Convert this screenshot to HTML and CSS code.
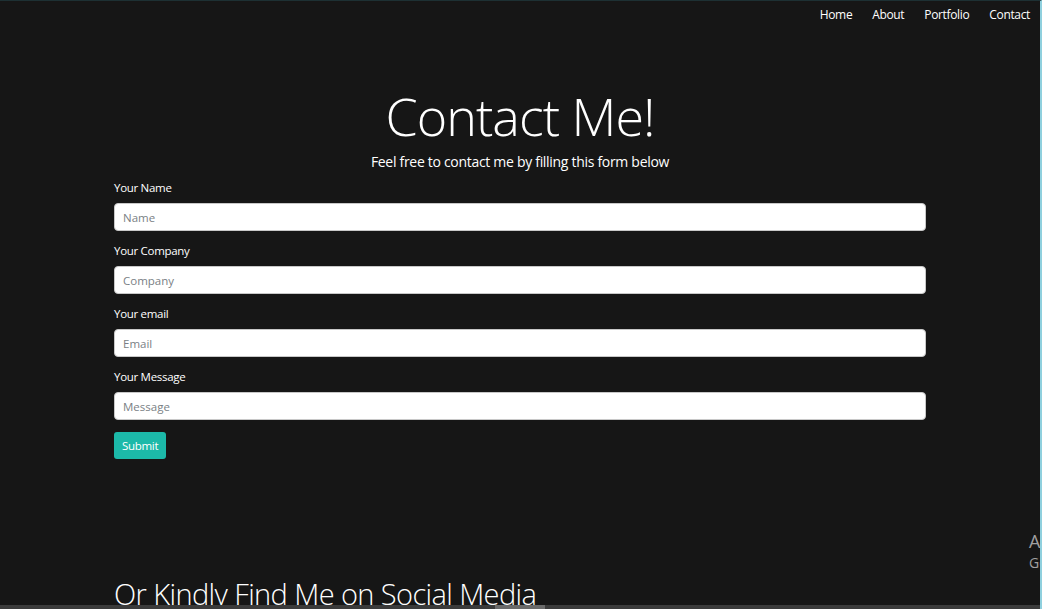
FILE: index.html
```html
<!DOCTYPE html>
<html lang="en">
<head>
<meta charset="utf-8">
<title>Contact Me</title>
<link rel="stylesheet" href="styles.css">
</head>
<body>
<div class="frame">
  <nav class="nav">
    <a href="#">Home</a>
    <a href="#">About</a>
    <a href="#">Portfolio</a>
    <a href="#">Contact</a>
  </nav>
  <main class="container">
    <header class="hero">
      <h1 class="title">Contact Me!</h1>
      <p class="lead">Feel free to contact me by filling this form below</p>
    </header>
    <form class="form">
      <div class="group">
        <label class="label">Your Name</label>
        <input class="field" type="text" placeholder="Name">
      </div>
      <div class="group">
        <label class="label">Your Company</label>
        <input class="field" type="text" placeholder="Company">
      </div>
      <div class="group">
        <label class="label">Your email</label>
        <input class="field" type="text" placeholder="Email">
      </div>
      <div class="group">
        <label class="label">Your Message</label>
        <input class="field" type="text" placeholder="Message">
      </div>
      <button class="submit" type="button">Submit</button>
    </form>
    <h2 class="social">Or Kindly Find Me on Social Media</h2>
  </main>
  <div class="watermark">
    <div class="wm-title">Activate Windows</div>
    <div class="wm-sub">Go to Settings to activate Windows.</div>
  </div>
  <div class="bottombar"><span class="thumb"></span></div>
</div>
</body>
</html>
```
FILE: styles.css
```css
* { box-sizing: border-box; }
html, body { margin: 0; padding: 0; background: #161616; }
body { font-family: "Open Sans", "Liberation Sans", sans-serif; color: #fff; }

.frame {
  position: relative;
  width: 1042px;
  height: 609px;
  overflow: hidden;
  background: #161616;
  border-top: 1px solid #1d3033;
  border-right: 2px solid #8fd0de;
}

.nav {
  display: flex;
  justify-content: flex-end;
  gap: 20px;
  padding: 6px 10px 0 0;
  height: 28px;
}
.nav a {
  color: #fff;
  text-decoration: none;
  font-size: 12px;
  letter-spacing: -0.35px;
  line-height: 16px;
}

.container {
  width: 812px;
  margin: 0 auto;
}

.hero { text-align: center; padding-top: 56px; }
.title {
  margin: 0;
  font-weight: 300;
  font-size: 52px;
  letter-spacing: -1px;
  line-height: 62px;
}
.lead {
  margin: 4px 0 0;
  font-size: 14px;
  letter-spacing: -0.3px;
  line-height: 22px;
  font-weight: 400;
}

.form { margin-top: 7px; }
.group { display: flex; flex-direction: column; margin-bottom: 12px; }
.label {
  font-size: 11.5px;
  letter-spacing: -0.3px;
  line-height: 16px;
  margin-bottom: 7px;
}
.field {
  width: 100%;
  height: 28px;
  border: 1px solid #c8c8c8;
  border-radius: 4px;
  background: #fff;
  padding: 0 8px;
  font-family: inherit;
  font-size: 11.5px;
  color: #333;
}
.field::placeholder { color: #7a7f85; }

.submit {
  display: block;
  margin: 0;
  height: 27px;
  padding: 0 8px;
  border: none;
  border-radius: 3px;
  background: #1cb9a9;
  color: #fff;
  font-family: inherit;
  font-size: 11.5px;
  letter-spacing: -0.3px;
}

.social {
  margin: 117px 0 0;
  font-weight: 300;
  font-size: 29px;
  letter-spacing: -0.6px;
  line-height: 36px;
}

.watermark {
  position: absolute;
  left: 1029px;
  top: 528px;
  color: #a0a0a0;
  white-space: nowrap;
}
.wm-title { font-size: 18px; line-height: 24px; }
.wm-sub { font-size: 14px; line-height: 20px; }

.bottombar {
  position: absolute;
  left: 0;
  right: 0;
  bottom: 0;
  height: 4px;
  background: #3b3b3b;
}
.thumb {
  position: absolute;
  left: 495px;
  width: 50px;
  top: 0;
  bottom: 0;
  background: #6a6a6a;
}
```
